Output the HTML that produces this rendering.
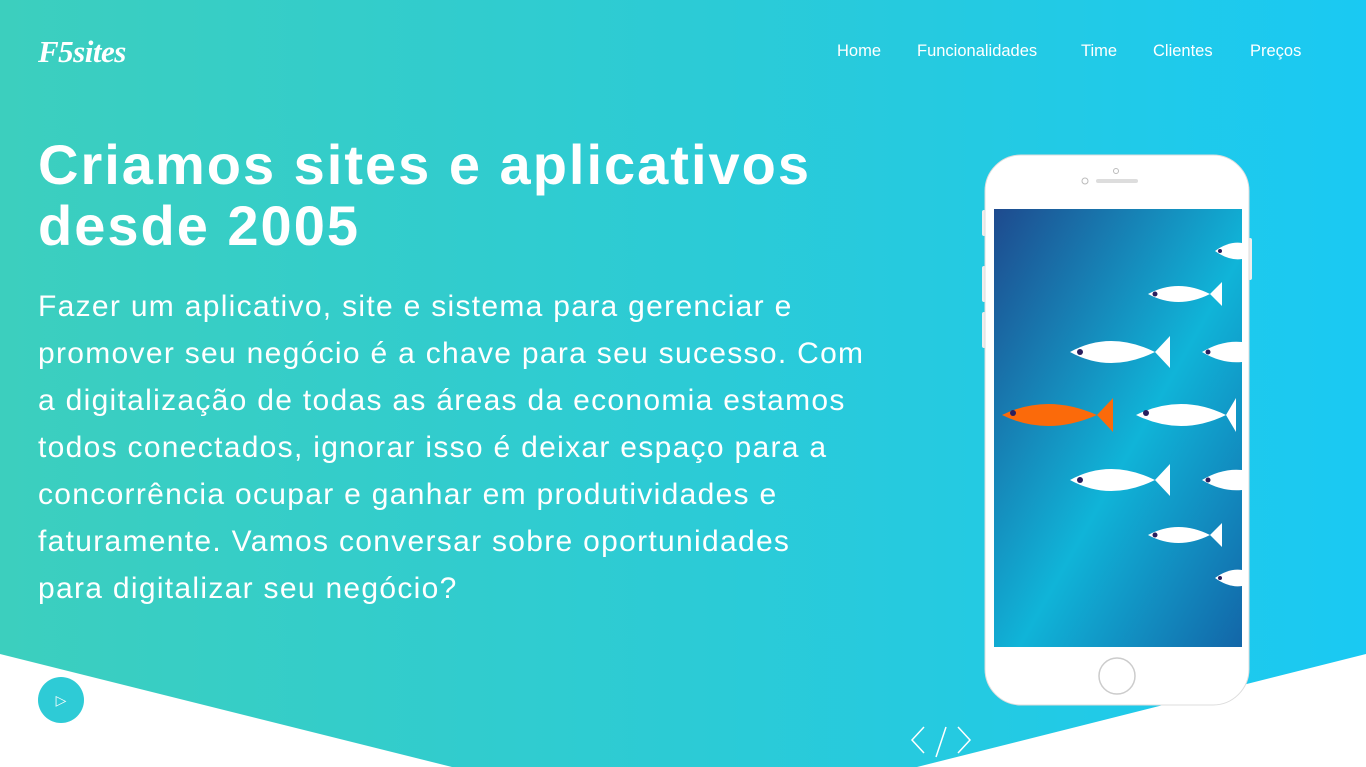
<!DOCTYPE html>
<html><head><meta charset="utf-8"><style>
*{margin:0;padding:0;box-sizing:border-box}
body{width:1366px;height:767px;overflow:hidden;position:relative;font-family:"Liberation Sans",sans-serif;color:#fff;background:linear-gradient(90deg,#3ccfbe 0%,#2ccbd5 50%,#1ac9f3 100%)}
.logo{position:absolute;left:38px;top:34px;font-family:"Liberation Serif",serif;font-style:italic;font-weight:bold;font-size:31px;letter-spacing:-0.5px}
nav{position:absolute;top:42px;font-size:16.5px}
nav span{position:absolute;white-space:nowrap}
h1{position:absolute;left:38px;top:134px;font-size:56px;line-height:61px;font-weight:bold;letter-spacing:2px}
p{position:absolute;left:38px;top:283px;font-size:30px;line-height:47px;letter-spacing:1.3px;white-space:nowrap}
.play{position:absolute;left:38px;top:677px;width:46px;height:46px;border-radius:50%;background:#2ecbd6;display:flex;align-items:center;justify-content:center;font-size:14px}
</style></head><body>
<svg style="position:absolute;left:0;top:0" width="1366" height="767">
<polygon points="0,654 452,767 0,767" fill="#fff"/>
<polygon points="917,767 1366,654 1366,767" fill="#fff"/>
<defs><linearGradient id="sc" x1="0" y1="0" x2="1" y2="1"><stop offset="0" stop-color="#1e4a8e"/><stop offset="0.55" stop-color="#10b4d8"/><stop offset="1" stop-color="#1366a8"/></linearGradient>
<clipPath id="cp"><rect x="994" y="209" width="248" height="438"/></clipPath></defs>
<rect x="982" y="210" width="4" height="26" rx="2" fill="#eee"/>
<rect x="982" y="266" width="4" height="36" rx="2" fill="#eee"/>
<rect x="982" y="312" width="4" height="36" rx="2" fill="#eee"/>
<rect x="1248" y="238" width="4" height="42" rx="2" fill="#eee"/>
<rect x="985" y="155" width="264" height="550" rx="36" fill="#fff" stroke="#ddd"/>
<circle cx="1116" cy="171" r="2.5" fill="none" stroke="#bbb"/>
<circle cx="1085" cy="181" r="3" fill="none" stroke="#bbb"/>
<rect x="1096" y="179" width="42" height="4" rx="2" fill="#ddd"/>
<rect x="994" y="209" width="248" height="438" fill="url(#sc)"/>
<circle cx="1117" cy="676" r="18" fill="none" stroke="#ccc" stroke-width="1.5"/>
<g clip-path="url(#cp)">
<g fill="#fff">
<path d="M1070,352 q40,-22 85,0 l15,-16 v32 l-15,-16 q-45,22 -85,0z"/>
<path d="M1070,480 q40,-22 85,0 l15,-16 v32 l-15,-16 q-45,22 -85,0z"/>
<path d="M1136,415 q45,-22 90,0 l10,-17 v34 l-10,-17 q-45,22 -90,0z"/>
<path d="M1148,294 q30,-16 62,0 l12,-12 v24 l-12,-12 q-32,16 -62,0z"/>
<path d="M1148,535 q30,-16 62,0 l12,-12 v24 l-12,-12 q-32,16 -62,0z"/>
<path d="M1202,352 q20,-12 40,-10 v20 q-20,2 -40,-10z"/>
<path d="M1202,480 q20,-12 40,-10 v20 q-20,2 -40,-10z"/>
<path d="M1215,251 q14,-10 27,-8 v16 q-13,2 -27,-8z"/>
<path d="M1215,578 q14,-10 27,-8 v16 q-13,2 -27,-8z"/>
</g>
<path d="M1002,415 q45,-22 95,0 l16,-17 v34 l-16,-17 q-50,22 -95,0z" fill="#fb6a0a"/>
<g fill="#2a1f5e"><circle cx="1013" cy="413" r="3"/><circle cx="1080" cy="352" r="3"/><circle cx="1080" cy="480" r="3"/><circle cx="1146" cy="413" r="3"/><circle cx="1155" cy="294" r="2.5"/><circle cx="1155" cy="535" r="2.5"/><circle cx="1208" cy="352" r="2.5"/><circle cx="1208" cy="480" r="2.5"/><circle cx="1220" cy="251" r="2"/><circle cx="1220" cy="578" r="2"/></g>
</g>
<g stroke="#fff" stroke-width="1.5" fill="none"><path d="M924,727 l-12,13 l12,13"/><path d="M958,727 l12,13 l-12,13"/><path d="M946,727 l-10,30"/></g>
</svg>
<div class="logo">F5sites</div>
<nav><span style="left:837px">Home</span><span style="left:917px">Funcionalidades</span><span style="left:1081px">Time</span><span style="left:1153px">Clientes</span><span style="left:1250px">Preços</span></nav>
<h1>Criamos sites e aplicativos<br>desde 2005</h1>
<p>Fazer um aplicativo, site e sistema para gerenciar e<br>promover seu negócio é a chave para seu sucesso. Com<br>a digitalização de todas as áreas da economia estamos<br>todos conectados, ignorar isso é deixar espaço para a<br>concorrência ocupar e ganhar em produtividades e<br>faturamente. Vamos conversar sobre oportunidades<br>para digitalizar seu negócio?</p>
<div class="play">▷</div>
</body></html>
